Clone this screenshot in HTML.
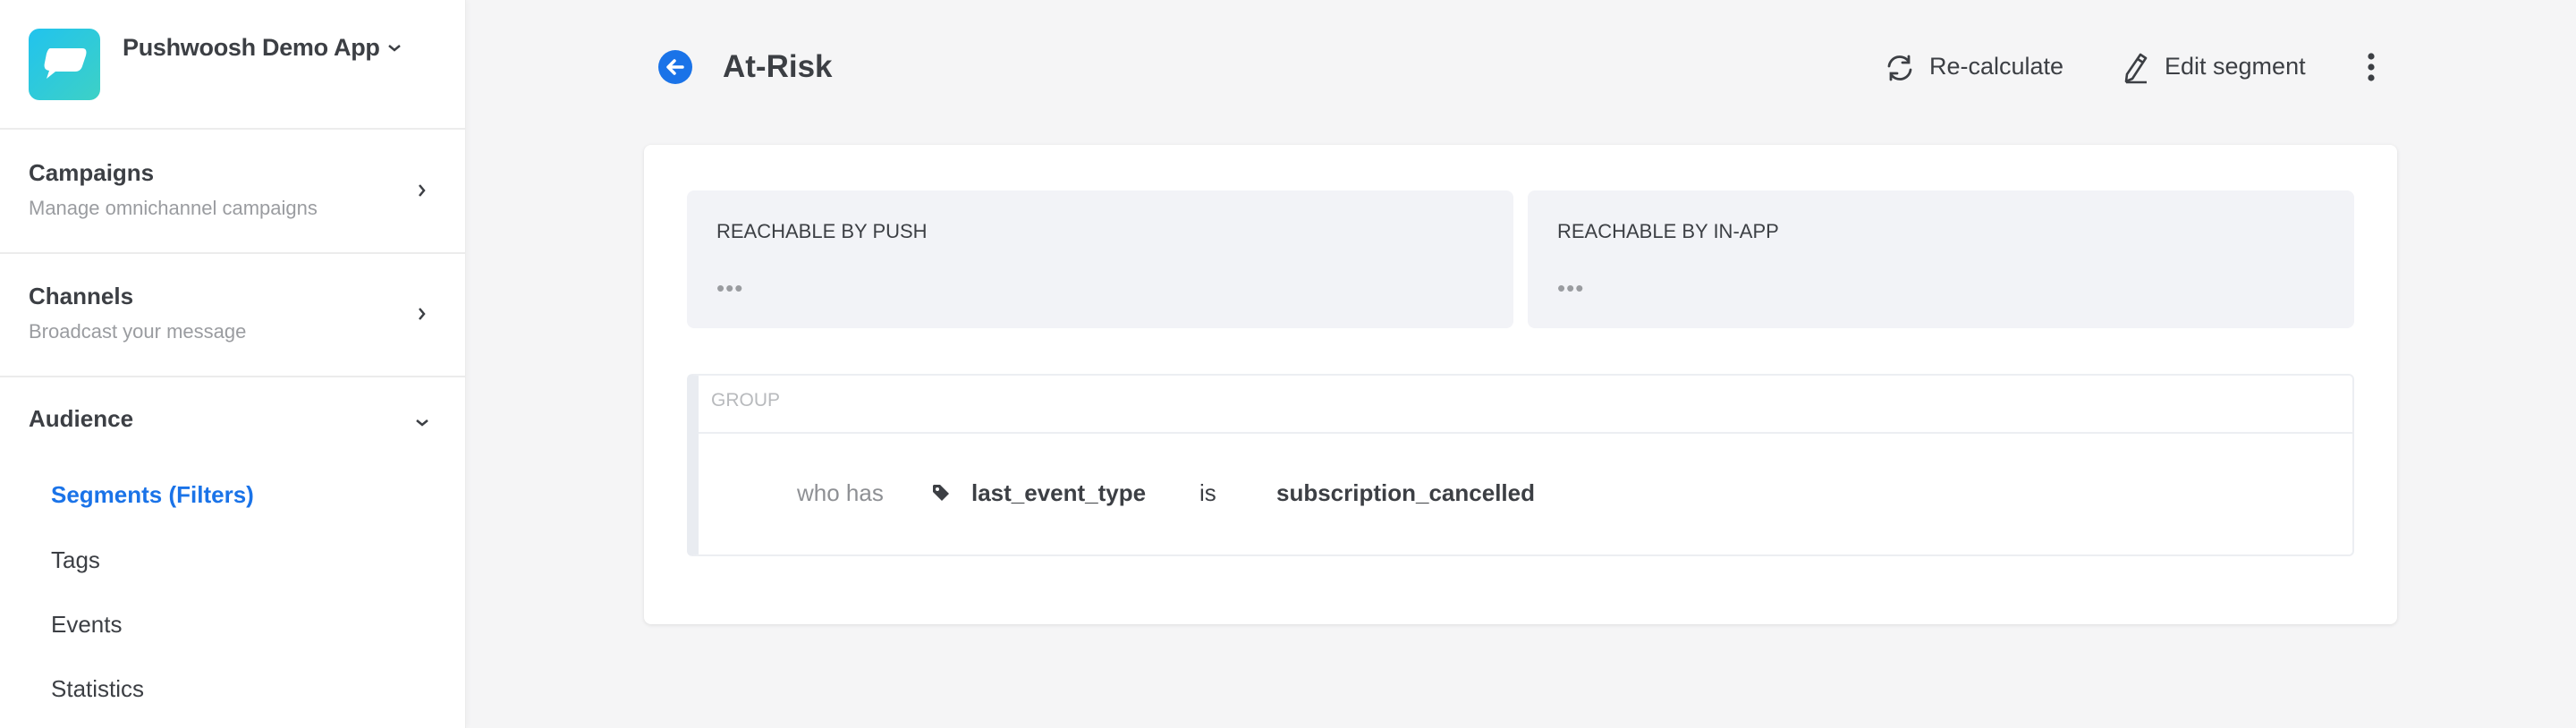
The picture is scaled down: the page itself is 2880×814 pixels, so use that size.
<!DOCTYPE html>
<html><head><meta charset="utf-8"><style>
*{margin:0;padding:0;box-sizing:border-box}
body{width:2880px;height:814px;overflow:hidden;background:#f5f5f6;font-family:"Liberation Sans",sans-serif;color:#3c3f44;position:relative}
.abs{position:absolute;white-space:nowrap}
.side{position:absolute;left:0;top:0;width:521px;height:814px;background:#fff;border-right:1px solid #ebebeb;box-shadow:2px 0 6px rgba(0,0,0,.03)}
.hr{position:absolute;left:0;width:521px;height:2px;background:#ececec}
.t{font-size:26px;font-weight:500;color:#3c3f44}
.s{font-size:22px;color:#9a9ca0}
.sub{font-size:26px;color:#3c3f44}
.card{position:absolute;left:720px;top:162px;width:1960px;height:536px;background:#fff;border-radius:8px;box-shadow:0 1px 4px rgba(0,0,0,.1)}
.stat{position:absolute;top:213px;height:154px;background:#f2f3f7;border-radius:8px}
.lbl{font-size:22px;color:#3c3f44}
.dots{font-size:26px;color:#9a9ca0;letter-spacing:1px}
</style></head><body>
<div class="side">
  <div class="abs" style="left:32px;top:32px;width:80px;height:80px;border-radius:12px;background:linear-gradient(135deg,#21c3ee,#3dd1c6)">
    <svg width="80" height="80" viewBox="0 0 80 80"><path d="M24 22 H60 Q66 22 64 30 L60 42 Q58 48 52 48 H30 L20 56 L23 47 Q16 46 18 38 L20 28 Q22 22 24 22Z" fill="#fff"/></svg>
  </div>
  <div class="abs t" style="left:137px;top:38px;font-size:27px;font-weight:bold;letter-spacing:-0.3px">Pushwoosh Demo App</div>
  <svg class="abs" style="left:432px;top:48px" width="18" height="12" viewBox="0 0 18 12"><path d="M3 3 L9 8 L15 3" stroke="#3c3f44" stroke-width="2.5" fill="none"/></svg>
  <div class="hr" style="top:143px"></div>
  <div class="abs t" style="left:32px;top:178px;font-weight:bold">Campaigns</div>
  <div class="abs s" style="left:32px;top:220px">Manage omnichannel campaigns</div>
  <svg class="abs" style="left:466px;top:204px" width="12" height="18" viewBox="0 0 12 18"><path d="M3 3 L8 9 L3 15" stroke="#3c3f44" stroke-width="2.5" fill="none"/></svg>
  <div class="hr" style="top:282px"></div>
  <div class="abs t" style="left:32px;top:316px;font-weight:bold">Channels</div>
  <div class="abs s" style="left:32px;top:358px">Broadcast your message</div>
  <svg class="abs" style="left:466px;top:342px" width="12" height="18" viewBox="0 0 12 18"><path d="M3 3 L8 9 L3 15" stroke="#3c3f44" stroke-width="2.5" fill="none"/></svg>
  <div class="hr" style="top:420px"></div>
  <div class="abs t" style="left:32px;top:453px;font-weight:bold">Audience</div>
  <svg class="abs" style="left:463px;top:467px" width="18" height="12" viewBox="0 0 18 12"><path d="M3 3 L9 8 L15 3" stroke="#3c3f44" stroke-width="2.5" fill="none"/></svg>
  <div class="abs sub" style="left:57px;top:538px;color:#1a73e8;font-weight:bold">Segments (Filters)</div>
  <div class="abs sub" style="left:57px;top:611px">Tags</div>
  <div class="abs sub" style="left:57px;top:683px">Events</div>
  <div class="abs sub" style="left:57px;top:755px">Statistics</div>
</div>

<svg class="abs" style="left:736px;top:56px" width="38" height="38" viewBox="0 0 38 38"><circle cx="19" cy="19" r="19" fill="#1a73e8"/><path d="M27 19 H12 M18 12 L11 19 L18 26" stroke="#fff" stroke-width="3.5" fill="none" stroke-linecap="round" stroke-linejoin="round"/></svg>
<div class="abs" style="left:808px;top:55px;font-size:35px;font-weight:bold;color:#3c3f44">At-Risk</div>

<svg class="abs" style="left:2107px;top:59px" width="34" height="34" viewBox="0 0 34 34" fill="none" stroke="#3c3f44" stroke-width="2.8" stroke-linecap="round"><path d="M5 15 A12 12 0 0 1 27 10 M27 4 V11 H20 M29 19 A12 12 0 0 1 7 24 M7 30 V23 H14"/></svg>
<div class="abs" style="left:2157px;top:59px;font-size:27px;color:#3c3f44;font-weight:500">Re-calculate</div>
<svg class="abs" style="left:2372px;top:58px" width="32" height="36" viewBox="0 0 32 36" fill="none" stroke="#3c3f44" stroke-width="2.6" stroke-linejoin="round"><path d="M21 3 L27 7 L12 30 L5 33 L6 25 Z M18 8 L24 12"/><path d="M5 34 H28"/></svg>
<div class="abs" style="left:2420px;top:59px;font-size:27px;color:#3c3f44">Edit segment</div>
<svg class="abs" style="left:2644px;top:58px" width="14" height="36" viewBox="0 0 14 36" fill="#3c3f44"><circle cx="7" cy="5" r="3.6"/><circle cx="7" cy="17" r="3.6"/><circle cx="7" cy="29" r="3.6"/></svg>

<div class="card"></div>
<div class="stat" style="left:768px;width:924px"></div>
<div class="stat" style="left:1708px;width:924px"></div>
<div class="abs lbl" style="left:801px;top:246px">REACHABLE BY PUSH</div>
<div class="abs dots" style="left:801px;top:307px">•••</div>
<div class="abs lbl" style="left:1741px;top:246px">REACHABLE BY IN-APP</div>
<div class="abs dots" style="left:1741px;top:307px">•••</div>

<div class="abs" style="left:768px;top:418px;width:1864px;height:204px;border:2px solid #eceef2;border-left:13px solid #e9ecf1;border-radius:6px;background:#fff"></div>
<div class="abs" style="left:781px;top:483px;width:1849px;height:2px;background:#eceef2"></div>
<div class="abs" style="left:795px;top:436px;font-size:21px;color:#b8babd">GROUP</div>
<div class="abs" style="left:891px;top:536px;font-size:26px;color:#8e9094">who has</div>
<svg class="abs" style="left:1041px;top:540px" width="22" height="22" viewBox="0 0 22 22"><path d="M2 3 V10 L12 20 L20 12 L10 2 H3 Z" fill="#3c3f44"/><circle cx="7" cy="7" r="2" fill="#fff"/></svg>
<div class="abs" style="left:1086px;top:536px;font-size:26px;font-weight:bold;color:#3c3f44">last_event_type</div>
<div class="abs" style="left:1341px;top:536px;font-size:26px;color:#3c3f44">is</div>
<div class="abs" style="left:1427px;top:536px;font-size:26px;font-weight:bold;color:#3c3f44">subscription_cancelled</div>
</body></html>
